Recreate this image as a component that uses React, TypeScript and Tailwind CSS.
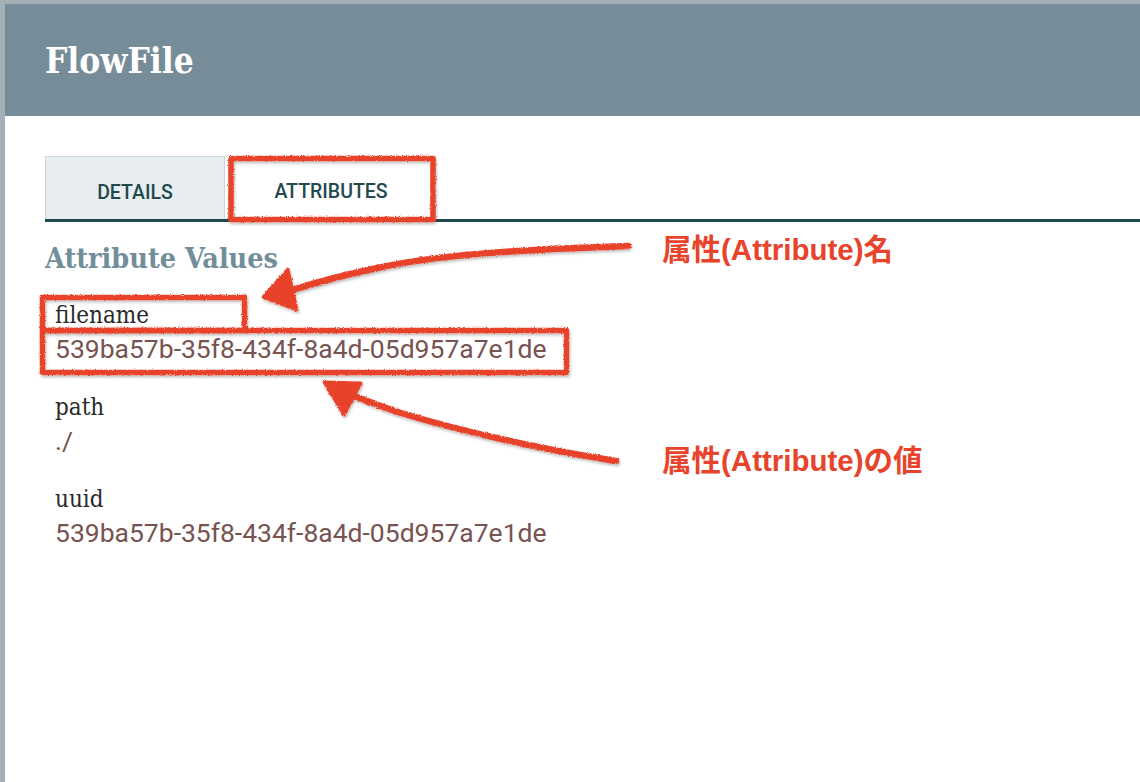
import React from "react";

const RED = "#e8432b";

function Annotations() {
  return (
    <svg
      className="pointer-events-none absolute left-0 top-0"
      width={1140}
      height={782}
      viewBox="0 0 1140 782"
    >
      <defs>
        <filter id="rough" x="-5%" y="-5%" width="110%" height="110%">
          <feTurbulence type="fractalNoise" baseFrequency="0.9" numOctaves="2" seed="3" result="n" />
          <feDisplacementMap in="SourceGraphic" in2="n" scale="3" xChannelSelector="R" yChannelSelector="G" result="d" />
          <feGaussianBlur in="SourceAlpha" stdDeviation="1.5" result="b" />
          <feOffset in="b" dx="1" dy="2" result="o" />
          <feComponentTransfer in="o" result="s">
            <feFuncA type="linear" slope="0.25" />
          </feComponentTransfer>
          <feMerge>
            <feMergeNode in="s" />
            <feMergeNode in="d" />
          </feMerge>
        </filter>
      </defs>
      <g transform="translate(-4,-3)">
        <g filter="url(#rough)" stroke={RED} fill="none" strokeWidth={5.5} strokeLinejoin="round" strokeLinecap="round">
          <rect x={230} y={157.5} width={202} height={61} />
          <rect x={41.5} y={296.5} width={202} height={33} />
          <rect x={41.5} y={329.5} width={524} height={42} />
          <path d="M627 245 C 540 248, 440 252, 372 268 C 330 277, 305 284, 280 293" strokeWidth={6.5} />
          <path d="M262 296 L287 268 L296 309 Z" fill={RED} strokeWidth={3} />
          <path d="M615 460 C 540 448, 460 430, 400 412 C 380 406, 365 399, 345 392" strokeWidth={6.5} />
          <path d="M323 381 L360 382 L343 414 Z" fill={RED} strokeWidth={3} />
        </g>
      </g>
    </svg>
  );
}

function Item({ name, value }: { name: string; value: string }) {
  return (
    <div className="flex flex-col pb-[22px]">
      <div className="h-[35px] flex items-center font-['DejaVu_Serif'] font-stretch-condensed text-[24px] text-[#2a2a2a] leading-none">
        {name}
      </div>
      <div className="h-[35px] flex items-center font-['Roboto'] text-[26.5px] text-[#775351] leading-none">
        {value}
      </div>
    </div>
  );
}

export default function App() {
  return (
    <div className="relative w-[1140px] h-[782px] overflow-hidden bg-white border-t-4 border-l-[5px] border-[#a3b0b7]">
      <header className="h-[112px] bg-[#778c99] pl-10 flex items-center">
        <h1 className="font-['DejaVu_Serif'] font-stretch-condensed font-bold text-[35px] text-white leading-none">
          FlowFile
        </h1>
      </header>
      <div className="pl-10 pt-10">
        <div className="flex border-b-[3px] border-[#1f4a4f]">
          <div className="w-[180px] h-[63px] pt-[9px] flex items-center justify-center bg-[#e8edef] border border-b-0 border-[#cdd6da] font-['Roboto'] font-medium text-[19.5px] text-[#22494d]">
            DETAILS
          </div>
          <div className="w-[212px] h-[63px] pt-[9px] flex items-center justify-center bg-white font-['Roboto'] font-medium text-[19.5px] text-[#22494d]">
            ATTRIBUTES
          </div>
        </div>
        <h2 className="mt-[19px] h-[35px] flex items-center font-['DejaVu_Serif'] font-stretch-condensed font-bold text-[28.5px] text-[#728e9b] leading-none">
          Attribute Values
        </h2>
        <div className="pl-[10px] pt-[21px] flex flex-col">
          <Item name="filename" value="539ba57b-35f8-434f-8a4d-05d957a7e1de" />
          <Item name="path" value="./" />
          <Item name="uuid" value="539ba57b-35f8-434f-8a4d-05d957a7e1de" />
        </div>
      </div>
      <div className="absolute left-[657px] top-[228px] font-['Liberation_Sans','Noto_Sans_CJK_JP',sans-serif] font-bold text-[29.5px] text-[#e8432b] leading-[36px]">
        属性(Attribute)名
      </div>
      <div className="absolute left-[657px] top-[439px] font-['Liberation_Sans','Noto_Sans_CJK_JP',sans-serif] font-bold text-[29.5px] text-[#e8432b] leading-[36px]">
        属性(Attribute)の値
      </div>
      <Annotations />
    </div>
  );
}
